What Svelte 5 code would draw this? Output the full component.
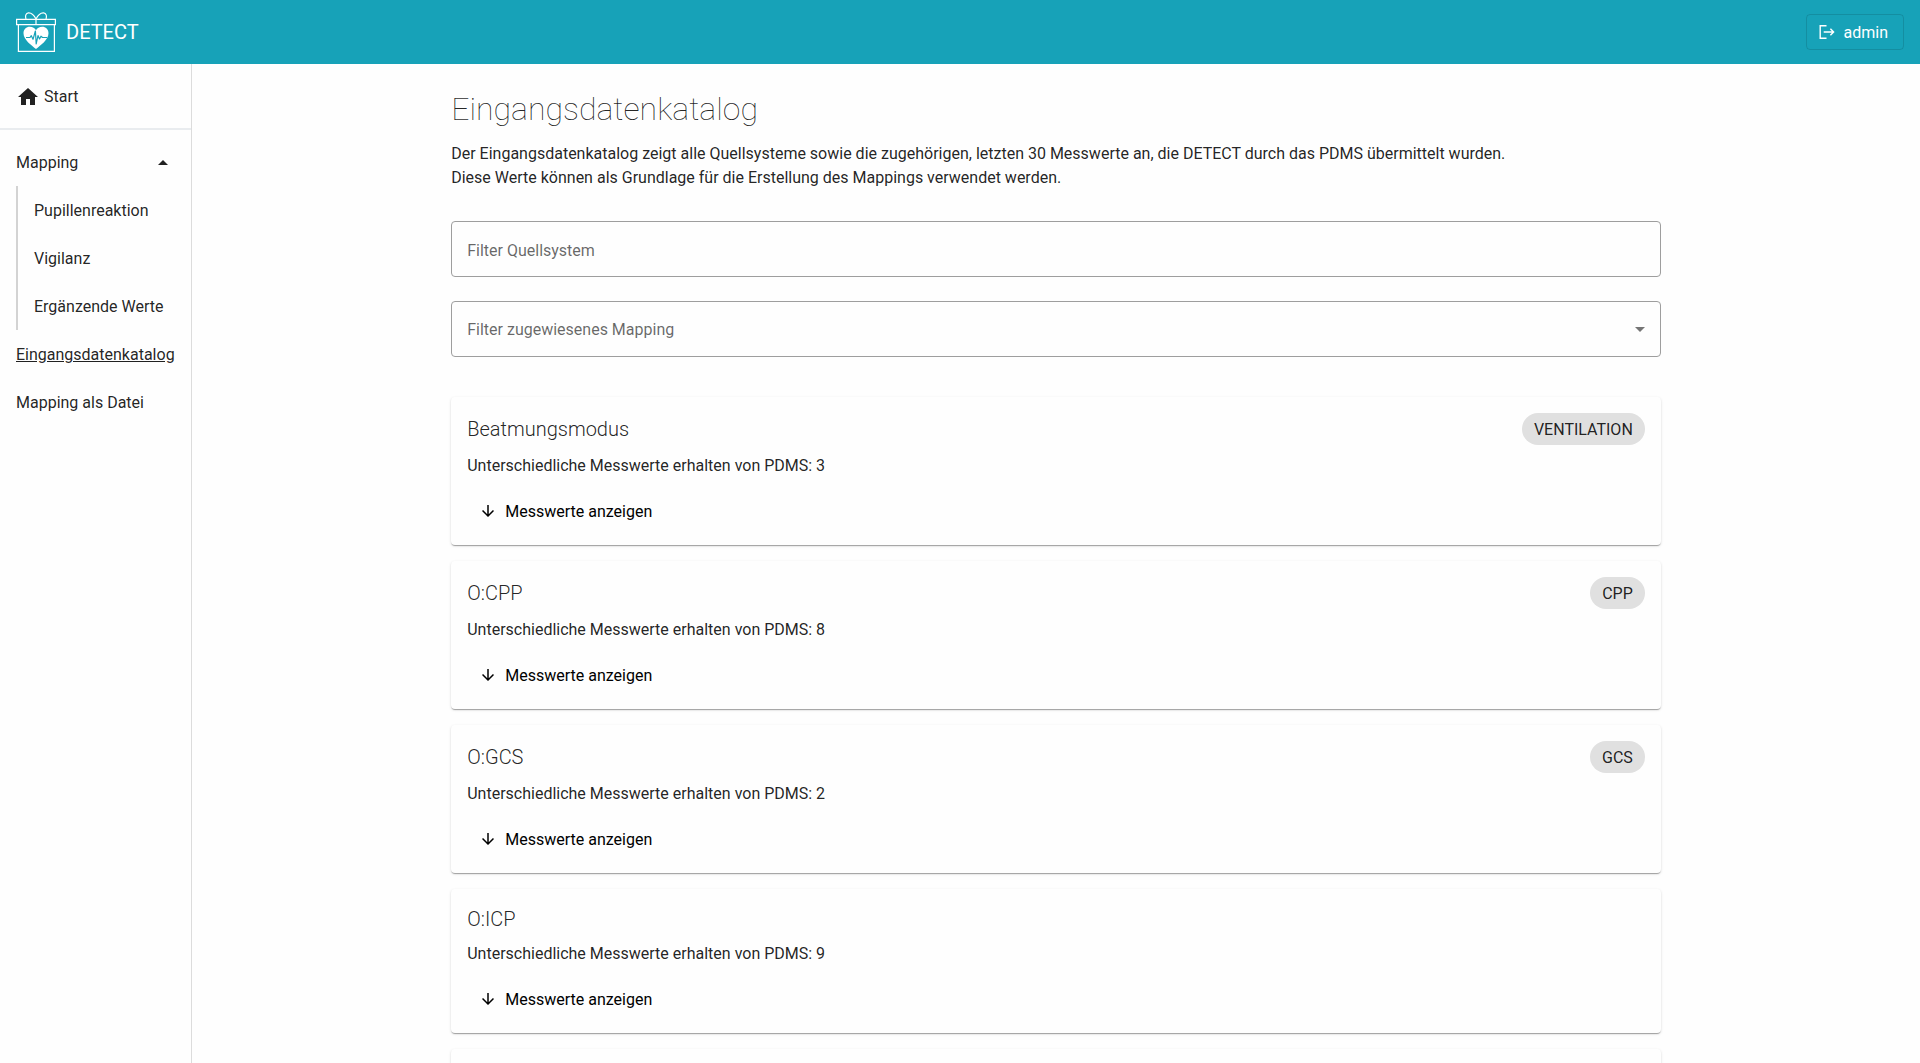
<script lang="ts">
  type Source = { name: string; count: number; mapping?: string };

  const sources: Source[] = [
    { name: 'Beatmungsmodus', count: 3, mapping: 'VENTILATION' },
    { name: 'O:CPP', count: 8, mapping: 'CPP' },
    { name: 'O:GCS', count: 2, mapping: 'GCS' },
    { name: 'O:ICP', count: 9 },
  ];

  const mappingLinks = ['Pupillenreaktion', 'Vigilanz', 'Ergänzende Werte'];

  let mappingOpen = $state(true);
  let sourceFilter = $state('');
  let mappingFilter = $state('');

  const visible = $derived(
    sources.filter(
      (s) =>
        s.name.toLowerCase().includes(sourceFilter.toLowerCase()) &&
        (!mappingFilter || s.mapping === mappingFilter)
    )
  );
</script>

<div class="app">
  <header class="topbar">
    <a class="brand" href="#start">
      <svg class="logo" viewBox="0 0 40 40" fill="none" stroke="#fff" aria-hidden="true">
        <path d="M.6 7.400h38.800v5.200H.6zM2.400 12.600v26.800h36V12.600M20 6.800v5.800" stroke-width="1.200" />
        <path d="M20 7C18 3 15 .6 12.400.8 9.800 1 9 4 10 7M20 7C22 3 25 .6 27.600.8c2.600.2 3.400 3.200 2.400 6.200" stroke-width="1.200" />
        <path d="M20 37C16 33.500 7.500 28 7.500 21.200c0-3.800 2.800-6.400 6.300-6.400 2.800 0 5.100 1.300 6.200 3.400 1.100-2.100 3.400-3.400 6.200-3.400 3.500 0 6.300 2.600 6.300 6.400C32.500 28 24 33.500 20 37z" fill="#fff" stroke="none" />
        <path d="M10 25.500h4l1.300-1.800 1.700 3.600 2.400-8.300.8 13 1.800-8.500 1.500 3.500 1.500-2.800 1.500 1.300H31" stroke="#17a2b8" stroke-width="1.200" stroke-linejoin="round" />
      </svg>
      <span>DETECT</span>
    </a>
    <button class="user">
      <svg width="16" height="16" viewBox="0 0 16 16" fill="none" stroke="currentColor" stroke-width="1.400" aria-hidden="true">
        <path d="M7.500 1.700H1.200v12.600h6.300M4.700 8h9.800M11.400 4.800 14.600 8l-3.200 3.200" />
      </svg>
      <span>admin</span>
    </button>
  </header>

  <div class="body">
    <nav class="sidebar">
      <a class="home" href="#start">
        <svg width="24" height="24" viewBox="0 0 24 24" fill="currentColor" aria-hidden="true">
          <path d="M10 20v-6h4v6h5v-8h3L12 3 2 12h3v8z" />
        </svg>
        Start
      </a>
      <div class="menu">
        <button class="item group" aria-expanded={mappingOpen} onclick={() => (mappingOpen = !mappingOpen)}>
          Mapping
          <svg class:closed={!mappingOpen} width="24" height="24" viewBox="0 0 24 24" fill="currentColor" aria-hidden="true">
            <path d="m7 14 5-5 5 5z" />
          </svg>
        </button>
        {#if mappingOpen}
          <div class="sub">
            {#each mappingLinks as link}
              <a class="item" href="#mapping">{link}</a>
            {/each}
          </div>
        {/if}
        <a class="item active" href="#katalog" aria-current="page">Eingangsdatenkatalog</a>
        <a class="item" href="#datei">Mapping als Datei</a>
      </div>
    </nav>

    <main>
      <div class="content">
        <h1>Eingangsdatenkatalog</h1>
        <p>
          Der Eingangsdatenkatalog zeigt alle Quellsysteme sowie die zugehörigen, letzten 30 Messwerte an, die DETECT durch das PDMS übermittelt wurden.<br />
          Diese Werte können als Grundlage für die Erstellung des Mappings verwendet werden.
        </p>

        <div class="filters">
          <input class="field" type="text" aria-label="Filter Quellsystem" placeholder="Filter Quellsystem" bind:value={sourceFilter} />
          <div class="select-wrap">
            <select class="field" aria-label="Filter zugewiesenes Mapping" bind:value={mappingFilter}>
              <option value="">Filter zugewiesenes Mapping</option>
              {#each sources as s}
                {#if s.mapping}
                  <option value={s.mapping}>{s.mapping}</option>
                {/if}
              {/each}
            </select>
            <svg class="caret" width="10" height="5" viewBox="0 0 10 5" fill="currentColor" aria-hidden="true">
              <path d="M0 0h10L5 5z" />
            </svg>
          </div>
        </div>

        <div class="cards">
          {#each visible as source (source.name)}
            <article class="card">
              <div class="card-head">
                <h2>{source.name}</h2>
                {#if source.mapping}
                  <span class="chip">{source.mapping}</span>
                {/if}
              </div>
              <div class="count">Unterschiedliche Messwerte erhalten von PDMS: {source.count}</div>
              <button class="show">
                <svg width="18" height="18" viewBox="0 0 24 24" fill="currentColor" aria-hidden="true">
                  <path d="m20 12-1.410-1.410L13 16.170V4h-2v12.170l-5.580-5.590L4 12l8 8z" />
                </svg>
                <span>Messwerte anzeigen</span>
              </button>
            </article>
          {/each}
          <article class="card"></article>
        </div>
      </div>
    </main>
  </div>
</div>

<style>
  :global(body) {
    margin: 0;
    background: #fefefe;
    color: rgba(0, 0, 0, 0.87);
    font: 16px/24px Roboto, 'Liberation Sans', sans-serif;
  }

  .app {
    display: flex;
    flex-direction: column;
    height: 100vh;
    overflow: hidden;
  }

  a {
    color: inherit;
    text-decoration: none;
  }

  button {
    font: inherit;
    color: inherit;
    background: none;
    border: 0;
    cursor: pointer;
  }

  button span {
    padding-top: 2px;
  }

  .topbar {
    display: flex;
    flex: none;
    align-items: center;
    justify-content: space-between;
    height: 64px;
    padding: 0 16px;
    background: #17a2b8;
    color: #fff;
  }

  .brand {
    display: flex;
    align-items: center;
    gap: 10px;
    font-size: 20px;
  }

  .logo {
    width: 40px;
    height: 40px;
  }

  .user {
    display: flex;
    align-items: center;
    gap: 9px;
    height: 36px;
    padding: 0 15px 0 12px;
    border: 1px solid rgba(0, 0, 0, 0.12);
    border-radius: 4px;
  }

  .body {
    display: flex;
    flex: 1;
    min-height: 0;
  }

  .sidebar {
    flex: none;
    box-sizing: border-box;
    width: 192px;
    border-right: 1px solid #dcdcdc;
  }

  .home {
    display: flex;
    box-sizing: border-box;
    align-items: center;
    gap: 4px;
    height: 66px;
    padding: 2px 16px 0;
    border-bottom: 2px solid #e9ecef;
  }

  .menu {
    padding: 8px 16px;
  }

  .item {
    display: flex;
    box-sizing: border-box;
    align-items: center;
    height: 48px;
    padding-top: 2px;
    white-space: nowrap;
  }

  .group {
    justify-content: space-between;
    width: 100%;
    padding: 2px 0 0;
  }

  .closed {
    transform: rotate(180deg);
  }

  .sub {
    padding-left: 16px;
    border-left: 2px solid #d3d3d3;
  }

  .active {
    text-decoration: underline;
  }

  main {
    flex: 1;
    min-width: 0;
    overflow-y: auto;
    scrollbar-width: none;
  }

  .content {
    width: 70%;
    margin: 0 auto;
    padding: 25px 0;
  }

  h1 {
    margin: 0 0 13px;
    font-size: 32px;
    font-weight: 100;
    line-height: 40px;
  }

  p {
    margin: 0 0 31px;
  }

  .filters {
    display: flex;
    flex-direction: column;
    gap: 24px;
    margin-bottom: 40px;
  }

  .field {
    box-sizing: border-box;
    display: block;
    width: 100%;
    height: 56px;
    padding: 2px 15px 0;
    border: 1px solid #9e9e9e;
    border-radius: 4px;
    background: transparent;
    color: rgba(0, 0, 0, 0.6);
    font: inherit;
    appearance: none;
  }

  .field::placeholder {
    color: rgba(0, 0, 0, 0.6);
    opacity: 1;
  }

  .select-wrap {
    position: relative;
  }

  .caret {
    position: absolute;
    top: 26px;
    right: 16px;
    color: #757575;
    pointer-events: none;
  }

  .cards {
    display: flex;
    flex-direction: column;
    gap: 16px;
  }

  .card {
    padding: 16px;
    border-radius: 4px;
    background: #fefefe;
    box-shadow:
      0 2px 1px -1px rgba(0, 0, 0, 0.2),
      0 1px 1px 0 rgba(0, 0, 0, 0.14),
      0 1px 3px 0 rgba(0, 0, 0, 0.12);
  }

  .card-head {
    display: flex;
    align-items: center;
    justify-content: space-between;
    margin-bottom: 9px;
  }

  h2 {
    margin: 0;
    font-size: 20px;
    font-weight: 300;
    line-height: 28px;
  }

  .chip {
    padding: 5px 12px 3px;
    border-radius: 16px;
    background: #e0e0e0;
  }

  .count {
    margin-bottom: 15px;
  }

  .show {
    display: flex;
    align-items: center;
    gap: 8px;
    height: 36px;
    padding: 0 12px;
    color: #000;
  }
</style>
